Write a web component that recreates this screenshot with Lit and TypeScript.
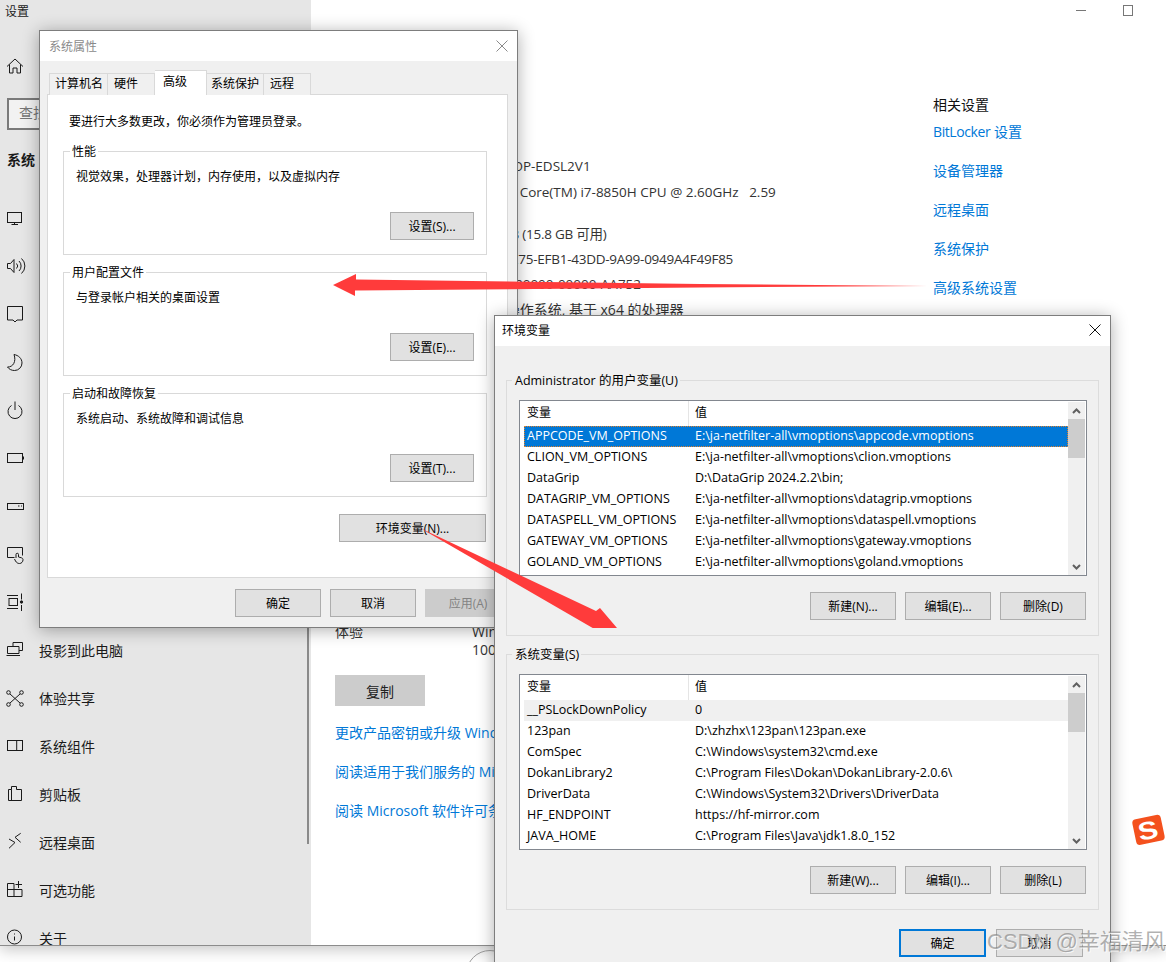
import { LitElement, html, css, svg } from "lit";
import { customElement } from "lit/decorators.js";

const ICONS: Record<string, any> = {
  home: svg`<path d="M4 12.500 12 5l8 7.500M6.500 10.500V19H10v-5h4v5h3.500v-8.500"/>`,
  display: svg`<rect x="4.500" y="6.500" width="14" height="10"/><path d="M11.500 16.500V18.500M8.500 18.500H15"/>`,
  sound: svg`<path d="M4.500 9.500h3l3.500-4v13l-3.500-4h-3zM13.500 9.500a3.500 3.500 0 0 1 0 5M16 7a7 7 0 0 1 0 10M18.500 4.500a10 10 0 0 1 0 15"/>`,
  notify: svg`<path d="M4.500 4.500h15v13.500h-5.500l-2 2-2-2H4.500z"/>`,
  moon: svg`<path d="M11 4.500c4.500.8 8 4 8 8.500a7.500 7.500 0 0 1-7.500 7.500c-3 0-5.500-1.300-7-3.500 5.500.3 9-5.500 6.500-12.500z"/>`,
  power: svg`<path d="M8.500 7.500a7 7 0 1 0 7 0M12 3.500V12"/>`,
  battery: svg`<rect x="4.500" y="7.500" width="15" height="9"/><path d="M20.500 10.500v3"/>`,
  storage: svg`<rect x="4.500" y="9.500" width="16" height="6"/><path d="M15 12h1.500M18 12h1"/>`,
  tablet: svg`<path d="M11.500 15.500h-7v-10h15v8M13 16v-3.500a1.200 1.200 0 0 1 2.500 0V15l3 .8c1 .3 1.500 1 1.500 2 0 2-1.500 3.700-3.500 3.700-2 0-3-1-4-2.500l-1-2"/>`,
  multitask: svg`<path d="M4 5.500h11M4 18.500h11M18.500 3.500v6M18.500 15v6"/><rect x="6" y="8.500" width="8.500" height="7"/><circle cx="18.500" cy="12" r="1.200" fill="#1a1a1a"/>`,
  project: svg`<path d="M10 8V4.500h9.500v8H16M4.500 8.500h11.500v7H4.500zM3.500 17.500H17"/>`,
  share: svg`<circle cx="5.500" cy="6.500" r="1.800"/><circle cx="18.500" cy="6.500" r="1.800"/><circle cx="5.500" cy="18.500" r="1.800"/><circle cx="18.500" cy="18.500" r="1.800"/><path d="M7 8l10 9M17 8 7 17"/>`,
  components: svg`<rect x="4.500" y="6.500" width="15" height="10"/><path d="M13.700 6.500v10"/>`,
  clipboard: svg`<path d="M8.500 7.500h-3v11h13v-11h-5V4.500h-5zM8.500 7.500V18"/>`,
  remote: svg`<path d="M6 9l6 3.500-6 5.800M17.700 3.300 12 7.300l5.700 5"/>`,
  optional: svg`<path d="M4.500 18.500V5.500h6.500v13M4.500 11.500h14.500v7H4.500M15.500 3v7M12.500 6.500h6.500"/>`,
  about: svg`<circle cx="11.500" cy="11" r="7"/><path d="M11.500 10.500v4M11.500 7.500v1"/>`,
};

const NAV: [string, string][] = [
  ["display", "显示"], ["sound", "声音"], ["notify", "通知和操作"], ["moon", "专注助手"],
  ["power", "电源和睡眠"], ["battery", "电池"], ["storage", "存储"], ["tablet", "平板电脑"],
  ["multitask", "多任务处理"], ["project", "投影到此电脑"], ["share", "体验共享"],
  ["components", "系统组件"], ["clipboard", "剪贴板"], ["remote", "远程桌面"],
  ["optional", "可选功能"], ["about", "关于"],
];

const USER_VARS: [string, string][] = [
  ["APPCODE_VM_OPTIONS", "E:\\ja-netfilter-all\\vmoptions\\appcode.vmoptions"],
  ["CLION_VM_OPTIONS", "E:\\ja-netfilter-all\\vmoptions\\clion.vmoptions"],
  ["DataGrip", "D:\\DataGrip 2024.2.2\\bin;"],
  ["DATAGRIP_VM_OPTIONS", "E:\\ja-netfilter-all\\vmoptions\\datagrip.vmoptions"],
  ["DATASPELL_VM_OPTIONS", "E:\\ja-netfilter-all\\vmoptions\\dataspell.vmoptions"],
  ["GATEWAY_VM_OPTIONS", "E:\\ja-netfilter-all\\vmoptions\\gateway.vmoptions"],
  ["GOLAND_VM_OPTIONS", "E:\\ja-netfilter-all\\vmoptions\\goland.vmoptions"],
];
const SYS_VARS: [string, string][] = [
  ["__PSLockDownPolicy", "0"],
  ["123pan", "D:\\zhzhx\\123pan\\123pan.exe"],
  ["ComSpec", "C:\\Windows\\system32\\cmd.exe"],
  ["DokanLibrary2", "C:\\Program Files\\Dokan\\DokanLibrary-2.0.6\\"],
  ["DriverData", "C:\\Windows\\System32\\Drivers\\DriverData"],
  ["HF_ENDPOINT", "https://hf-mirror.com"],
  ["JAVA_HOME", "C:\\Program Files\\Java\\jdk1.8.0_152"],
];

@customElement("app-root")
export class AppRoot extends LitElement {
  static styles = css`
    :host {
      display: block; position: relative; width: 1166px; height: 962px; overflow: hidden;
      background: #fff; color: #000;
      font-family: "Open Sans", "Noto Sans CJK SC", sans-serif; font-size: 12px;
    }
    svg.ico { width: 24px; height: 24px; flex: none; fill: none; stroke: #1a1a1a; stroke-width: 1; }

    .settings {
      position: absolute; left: 0; top: 0; width: 1166px; height: 945px; display: flex;
      background: #fff; border-bottom: 1px solid #8c8c8c; box-shadow: 0 4px 14px rgba(0,0,0,.22);
      overflow: hidden; box-sizing: content-box;
    }
    .side { width: 311px; flex: none; background: #e6e6e6; position: relative; overflow: hidden; }
    .apptitle { height: 42px; box-sizing: border-box; padding: 4px 0 0 5px; line-height: 16px; color: #222; }
    .nav { height: 48px; display: flex; align-items: center; padding-left: 3px; gap: 12px; font-size: 14px; color: #1a1a1a; }
    .search {
      margin: 8px 14px 0 7px; height: 32px; box-sizing: border-box; border: 2px solid #7a7a7a;
      background: #f2f2f2; color: #767676; font-size: 14px; line-height: 26px; padding-left: 10px;
    }
    .sec { height: 40px; margin: 10px 0 14px; padding-left: 7px; font-size: 14px; font-weight: 700; line-height: 40px; color: #1a1a1a; }
    .sbar { position: absolute; left: 307px; top: 120px; width: 2px; height: 724px; background: #8a8a8a; }

    .main { flex: 1; display: flex; padding-left: 24px; position: relative; font-size: 14px; }
    .col { width: 598px; flex: none; padding-top: 153px; color: #333; }
    .spec { display: flex; line-height: 25px; white-space: nowrap; }
    .spec b { width: 137px; flex: none; font-weight: 400; }
    .spec.top { line-height: 26px; }
    .spec.two { line-height: 18px; margin-top: 301px; }
    .spec.wrap { line-height: 26px; height: 43px; }
    .lat { font-size: 13.5px; }
    .tight { font-size: 13.5px; letter-spacing: -.25px; }
    .copy {
      margin-top: 16px; width: 90px; height: 31px; background: #ccc; color: #222;
      display: flex; align-items: center; justify-content: center;
    }
    .lk { color: #0078d7; white-space: nowrap; line-height: 20px; }
    .lk i { font-style: normal; letter-spacing: -.4px; }
    .col .lk { margin-top: 19px; }
    .col .lk.first { margin-top: 17px; }
    .rel { padding-top: 95px; }
    .rel h4 { margin: 0 0 7px; font-size: 14px; font-weight: 400; line-height: 20px; color: #111; }
    .rel .lk { margin-bottom: 19px; }
    .ctl { position: absolute; right: 33px; top: 5px; display: flex; gap: 37px; align-items: center; }
    .min { width: 10px; height: 1px; background: #777; }
    .max { width: 8px; height: 9px; border: 1px solid #777; }

    .arc { position: absolute; left: 466px; top: 950px; width: 40px; height: 14px; fill: none; stroke: #9a9a9a; }

    .dlg {
      position: absolute; box-sizing: border-box; border: 1px solid #7d7d7d; background: #f0f0f0;
      box-shadow: 0 2px 16px rgba(0,0,0,.32);
    }
    .sys { left: 39px; top: 30px; width: 479px; height: 598px; }
    .env { left: 494px; top: 315px; width: 617px; height: 670px; }
    .tbar { height: 30px; background: #fff; display: flex; align-items: center; justify-content: space-between; padding: 0 9px; }
    .sys .tbar { color: #8a8a8a; }
    .env .tbar { box-sizing: border-box; height: 30px; padding: 0 7px 2px; }
    .x { width: 12px; height: 12px; fill: none; stroke-width: 1; }
    .sys .x { stroke: #8a8a8a; margin-right: 0; }
    .env .x { stroke: #111; margin-right: 2px; }

    .tabs { display: flex; align-items: flex-end; height: 25px; margin: 9px 0 -1px 9px; position: relative; }
    .tab {
      height: 22px; box-sizing: border-box; border: 1px solid #d9d9d9; border-bottom: 0; border-left-width: 0;
      background: #f0f0f0; padding-left: 6px; line-height: 20px; white-space: nowrap;
    }
    .tab:first-child { border-left-width: 1px; padding-left: 5px; }
    .tab.on { height: 25px; background: #fff; padding-left: 8px; line-height: 21px; }
    .tab.five { padding-left: 4px; }
    .w59 { width: 59px; } .w47 { width: 47px; } .w52 { width: 52px; } .w57 { width: 57px; }
    .panel {
      margin: 0 9px 0 7px; height: 484px; box-sizing: border-box; background: #fff; border: 1px solid #d9d9d9;
      padding: 19px 20px 0 15px;
    }
    .tip { padding-left: 6px; line-height: 16px; }
    .grp {
      height: 104px; box-sizing: border-box; border: 1px solid #d9d9d9; margin-top: 17px;
      padding: 0 12px 14px 7px; display: flex; flex-direction: column;
    }
    .grp.one { margin-top: 21px; }
    .leg { align-self: flex-start; margin: -8px 0 0 -1px; padding: 0 2px; background: #fff; line-height: 16px; }
    .dsc { margin: 9px 0 0 5px; line-height: 16px; }
    .btn {
      box-sizing: border-box; height: 28px; background: #e1e1e1; border: 1px solid #adadad;
      display: flex; align-items: center; justify-content: center; white-space: nowrap; flex: none;
    }
    .grp .btn { width: 84px; align-self: flex-end; margin-top: auto; }
    .envbtn { width: 147px; margin: 17px 0 0 276px; }
    .foot { display: flex; gap: 9px; padding: 11px 0 0 195px; }
    .foot .btn { width: 86px; }
    .btn.off { background: #ccc; border-color: #ccc; color: #838383; }

    .ebody { padding: 34px 11px 0; }
    .egrp {
      height: 256px; box-sizing: border-box; border: 1px solid #dcdcdc; padding: 0 11px 0 12px;
      display: flex; flex-direction: column; margin-bottom: 18px;
    }
    .eleg { align-self: flex-start; margin: -9px 0 0 -7px; padding: 0 2px 0 3px; background: #f0f0f0; line-height: 18px; white-space: nowrap; font-size: 12.5px; }
    .list {
      margin-top: 10px; height: 176px; box-sizing: border-box; border: 1px solid #82878f; background: #fff;
      display: flex; flex: none;
    }
    .lmain { flex: 1; min-width: 0; }
    .lhead { height: 25px; display: flex; padding-left: 7px; line-height: 24px; }
    .lhead span:first-child { width: 161px; flex: none; border-right: 1px solid #e5e5e5; margin-right: 6px; }
    .row {
      height: 21px; margin-left: 4px; box-sizing: border-box; display: flex; line-height: 20px;
      padding-left: 3px; white-space: nowrap; font-size: 12.5px;
    }
    .row span:first-child { width: 168px; flex: none; }
    .row.sel { background: #0078d7; color: #fff; outline: 1px dotted #e0802a; outline-offset: -1px; }
    .row.soft { background: #f0f0f0; }
    .scr { width: 17px; flex: none; background: #f0f0f0; display: flex; flex-direction: column; margin: 1px 1px 0 0; }
    .scr i { display: flex; height: 17px; flex: none; align-items: center; justify-content: center; }
    .scr svg { width: 9px; height: 6px; fill: none; stroke: #606060; stroke-width: 2; }
    .scr u { display: block; height: 39px; background: #cdcdcd; margin-left: 0; flex: none; }
    .scr em { flex: 1; }
    .acts { display: flex; gap: 9px; justify-content: flex-end; margin-top: 16px; padding-right: 1px; }
    .acts .btn { width: 86px; }
    .eok { display: flex; gap: 10px; padding: 1px 0 0 393px; margin-top: 18px; }
    .eok .btn { width: 87px; }
    .btn.def { border: 2px solid #0078d7; }

    .arrow { position: absolute; left: 0; top: 0; width: 1166px; height: 962px; pointer-events: none; }
    .sogou { position: absolute; left: 1130px; top: 812px; width: 36px; height: 36px; }
    .sogou text { font-family: "Liberation Sans", sans-serif; font-weight: 700; font-size: 25px; fill: #fff; }
    .mark {
      position: absolute; left: 987px; top: 927px; font-family: "Liberation Sans", "Noto Sans CJK SC", sans-serif;
      font-size: 22px; line-height: 30px; white-space: nowrap; color: rgba(125,125,125,.6);
      text-shadow: 1px 1px 0 rgba(255,255,255,.75);
    }
  `;

  private list(rows: [string, string][], kind: string) {
    return html`<div class="list">
      <div class="lmain">
        <div class="lhead"><span>变量</span><span>值</span></div>
        ${rows.map((r, i) => html`<div class="row ${i === 0 ? kind : ""}"><span>${r[0]}</span><span>${r[1]}</span></div>`)}
      </div>
      <div class="scr">
        <i><svg viewBox="0 0 9 6"><path d="M1 5l3.500-3.500L8 5"/></svg></i>
        <u></u><em></em>
        <i><svg viewBox="0 0 9 6"><path d="M1 1l3.500 3.500L8 1"/></svg></i>
      </div>
    </div>`;
  }

  private group(title: string, desc: string, btn: string, cls = "") {
    return html`<div class="grp ${cls}">
      <div class="leg">${title}</div>
      <div class="dsc">${desc}</div>
      <div class="btn">${btn}</div>
    </div>`;
  }

  private nav(key: string, label: string) {
    return html`<div class="nav"><svg class="ico" viewBox="0 0 24 24">${ICONS[key]}</svg><span>${label}</span></div>`;
  }

  render() {
    const close = html`<svg class="x" viewBox="0 0 12 12"><path d="M.5.500l11 11M11.500.500l-11 11"/></svg>`;
    return html`
      <div class="settings">
        <div class="side">
          <div class="apptitle">设置</div>
          ${this.nav("home", "主页")}
          <div class="search">查找设置</div>
          <div class="sec">系统</div>
          ${NAV.map((n) => this.nav(n[0], n[1]))}
          <div class="sbar"></div>
        </div>
        <div class="main">
          <div class="col">
            <div class="spec top"><b>设备名称</b><span class="lat">DESKTOP-EDSL2V1</span></div>
            <div class="spec wrap"><b>处理器</b><span class="lat">Intel(R) Core(TM) i7-8850H CPU @ 2.60GHz&nbsp;&nbsp; 2.59<br />GHz</span></div>
            <div class="spec"><b>机带 RAM</b><span class="tight">16.0 GB (15.8 GB 可用)</span></div>
            <div class="spec"><b>设备 ID</b><span class="tight">A3C1E275-EFB1-43DD-9A99-0949A4F49F85</span></div>
            <div class="spec"><b>产品 ID</b><span class="lat">00330-80000-00000-AA752</span></div>
            <div class="spec"><b>系统类型</b><span>64 位操作系统, 基于 x64 的处理器</span></div>
            <div class="spec two"><b>体验</b><span>Windows Feature Experience Pack<br />1000.19061.1000.0</span></div>
            <div class="copy">复制</div>
            <div class="lk first">更改产品密钥或升级 Windows</div>
            <div class="lk">阅读适用于我们服务的 Microsoft 服务协议</div>
            <div class="lk">阅读 Microsoft 软件许可条款</div>
          </div>
          <div class="rel">
            <h4>相关设置</h4>
            <div class="lk"><i>BitLocker</i> 设置</div>
            <div class="lk">设备管理器</div>
            <div class="lk">远程桌面</div>
            <div class="lk">系统保护</div>
            <div class="lk">高级系统设置</div>
          </div>
          <div class="ctl"><div class="min"></div><div class="max"></div></div>
        </div>
      </div>
      <svg class="arc" viewBox="0 0 40 14"><circle cx="24" cy="24" r="23.500"/></svg>

      <div class="dlg sys">
        <div class="tbar"><span>系统属性</span>${close}</div>
        <div class="tabs">
          <div class="tab w59">计算机名</div>
          <div class="tab w47">硬件</div>
          <div class="tab on w52">高级</div>
          <div class="tab five w57">系统保护</div>
          <div class="tab w47">远程</div>
        </div>
        <div class="panel">
          <div class="tip">要进行大多数更改，你必须作为管理员登录。</div>
          ${this.group("性能", "视觉效果，处理器计划，内存使用，以及虚拟内存", "设置(S)...", "one")}
          ${this.group("用户配置文件", "与登录帐户相关的桌面设置", "设置(E)...")}
          ${this.group("启动和故障恢复", "系统启动、系统故障和调试信息", "设置(T)...")}
          <div class="btn envbtn">环境变量(N)...</div>
        </div>
        <div class="foot">
          <div class="btn">确定</div><div class="btn">取消</div><div class="btn off">应用(A)</div>
        </div>
      </div>

      <div class="dlg env">
        <div class="tbar"><span>环境变量</span>${close}</div>
        <div class="ebody">
          <div class="egrp">
            <div class="eleg">Administrator 的用户变量(U)</div>
            ${this.list(USER_VARS, "sel")}
            <div class="acts"><div class="btn">新建(N)...</div><div class="btn">编辑(E)...</div><div class="btn">删除(D)</div></div>
          </div>
          <div class="egrp">
            <div class="eleg">系统变量(S)</div>
            ${this.list(SYS_VARS, "soft")}
            <div class="acts"><div class="btn">新建(W)...</div><div class="btn">编辑(I)...</div><div class="btn">删除(L)</div></div>
          </div>
          <div class="eok"><div class="btn def">确定</div><div class="btn">取消</div></div>
        </div>
      </div>

      <svg class="arrow" viewBox="0 0 1166 962">
        <path fill="#ff3b3b" d="M333 285 356 274 356 279.500 700 284 927 286 700 287.500 355 290.500 355 296Z"/>
        <path fill="#ff3b3b" d="M420 528 596 611 600 608 617 628 592.700 628Z"/>
      </svg>
      <svg class="sogou" viewBox="0 0 36 36">
        <rect x="4" y="5" width="29" height="26" rx="4" fill="#f4511e" transform="rotate(-12 18 18)" />
        <text x="15" y="27" text-anchor="middle" transform="rotate(-12 18 18) scale(1.2 1)">S</text>
      </svg>
      <div class="mark">CSDN @幸福清风</div>
    `;
  }
}
